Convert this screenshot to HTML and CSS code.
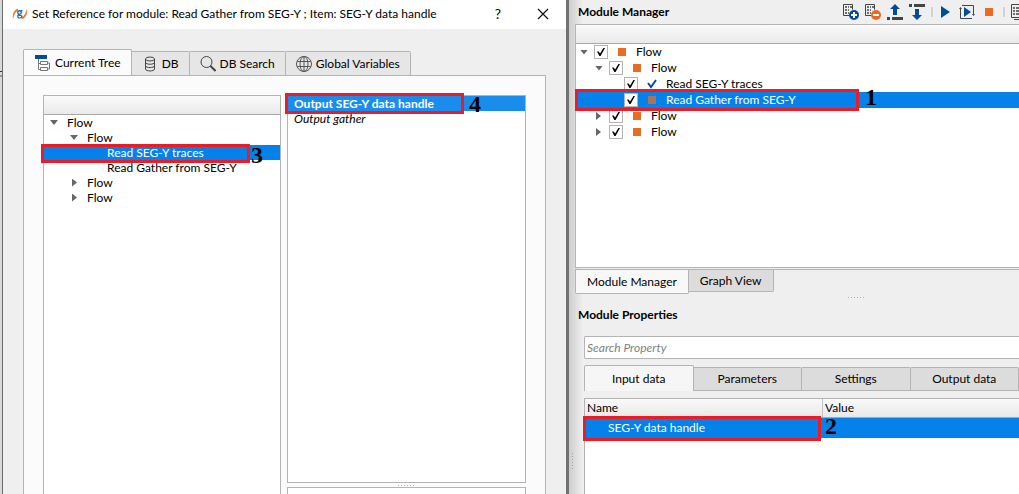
FILE: index.html
```html
<!DOCTYPE html>
<html lang="en">
<head>
    <meta charset="UTF-8">
    <meta name="viewport" content="width=device-width, initial-scale=1.0">
    <title>Set Reference for module</title>
    <link rel="stylesheet" href="styles.css">
</head>
<body>
    <div class="edge"></div>

    <!-- Reference dialog -->
    <section class="dialog">
        <header class="titlebar">
            <svg class="app-logo" width="16" height="16" viewBox="0 0 16 16">
                <path d="M6 2.500C2 4 0 8 1 13c1-4 2-7 5-8.500z" fill="#f07a28"/>
                <path d="M9.500 13.500C14 12 16 8 14.500 3c-.5 4-2 7-5 8.500z" fill="#f07a28"/>
                <circle cx="7.500" cy="6.500" r="1.800" fill="none" stroke="#1c6fb8" stroke-width="1.400"/>
                <path d="M8.500 4.700h2M7 8.300l-1 1.200h3c1.500 0 1.200 2.500-1.500 2.500-2 0-2.200-1.500-1-2.200" fill="none" stroke="#1c6fb8" stroke-width="1.200"/>
            </svg>
            <h1>Set Reference for module: Read Gather from SEG-Y ; Item: SEG-Y data handle</h1>
            <button class="title-btn" aria-label="Help">
                <span>?</span>
            </button>
            <button class="title-btn" aria-label="Close">
                <svg width="12" height="12" viewBox="0 0 12 12"><path d="M1 1l10 10M11 1L1 11" stroke="#111" stroke-width="1.200"/></svg>
            </button>
        </header>

        <div class="dialog-body">
            <nav class="tabs">
                <button class="tab active">
                    <svg width="16" height="16" viewBox="0 0 16 16">
                        <path d="M0 0h12v4H0z" fill="#004c97"/>
                        <path d="M3.500 4v10.500h2M3.500 8.500h2M5.500 6.500h7v3h-7zM5.500 12.500h7v3h-7zM12.500 8h2v6h-2" fill="none" stroke="#777"/>
                    </svg>
                    Current Tree
                </button>
                <button class="tab">
                    <svg width="16" height="16" viewBox="0 0 16 16">
                        <g fill="none" stroke="#444">
                            <ellipse cx="8" cy="3" rx="4.500" ry="2"/>
                            <path d="M3.500 3v10c0 2.600 9 2.600 9 0V3M3.500 6.300c0 2.600 9 2.600 9 0M3.500 9.600c0 2.600 9 2.600 9 0"/>
                        </g>
                    </svg>
                    DB
                </button>
                <button class="tab">
                    <svg width="16" height="16" viewBox="0 0 16 16">
                        <circle cx="6.500" cy="6" r="5.500" fill="none" stroke="#444"/>
                        <path d="M10.500 10l5 5" stroke="#444" stroke-width="2"/>
                    </svg>
                    DB Search
                </button>
                <button class="tab">
                    <svg width="16" height="16" viewBox="0 0 16 16">
                        <g fill="none" stroke="#555">
                            <circle cx="8" cy="8" r="7.500"/>
                            <ellipse cx="8" cy="8" rx="4" ry="7.500"/>
                            <path d="M8 .5v15M1.500 5.500h13M1.500 10.500h13"/>
                        </g>
                    </svg>
                    Global Variables
                </button>
            </nav>

            <div class="tab-page">
                <div class="tree">
                    <div class="list-header"></div>
                    <ul class="rows">
                        <li class="row"><i class="arrow open"></i>Flow</li>
                        <li class="row level-1"><i class="arrow open"></i>Flow</li>
                        <li class="row level-2 selected">Read SEG-Y traces<b class="mark mark-3"></b><b class="num num-3">3</b></li>
                        <li class="row level-2">Read Gather from SEG-Y</li>
                        <li class="row level-1"><i class="arrow"></i>Flow</li>
                        <li class="row level-1"><i class="arrow"></i>Flow</li>
                    </ul>
                </div>
                <div class="outputs">
                    <ul class="output-list">
                        <li class="row output selected">Output SEG-Y data handle<b class="mark mark-4"></b><b class="num num-4">4</b></li>
                        <li class="row output gather">Output gather</li>
                    </ul>
                    <div class="grip"></div>
                    <div class="output-info"></div>
                </div>
            </div>
        </div>
    </section>

    <!-- Main window behind the dialog -->
    <main class="main">
        <section class="manager">
            <header class="manager-head">
                <h2>Module Manager</h2>
                <div class="toolbar">
                    <button aria-label="Add module">
                        <svg width="16" height="16" viewBox="0 0 16 16">
                            <path d="M.5 11.500V.5h9v5M.5 11.500h6" fill="none" stroke="#444"/>
                            <path d="M2 3h2M5 3h1M7 3h2M2 6h2M5 6h1M2 9h2M5 9h1" stroke="#444" stroke-width="1.500"/>
                            <circle cx="11" cy="11" r="5" fill="#004c97"/>
                            <path d="M11 8v6M8 11h6" stroke="#fff" stroke-width="2"/>
                        </svg>
                    </button>
                    <button aria-label="Remove module">
                        <svg width="16" height="16" viewBox="0 0 16 16">
                            <path d="M.5 11.500V.5h9v5M.5 11.500h6" fill="none" stroke="#444"/>
                            <path d="M2 3h2M5 3h1M7 3h2M2 6h2M5 6h1M2 9h2M5 9h1" stroke="#444" stroke-width="1.500"/>
                            <circle cx="11" cy="11" r="5" fill="#ea6a20"/>
                            <path d="M8 11h6" stroke="#fff" stroke-width="2"/>
                        </svg>
                    </button>
                    <button aria-label="Move up">
                        <svg width="16" height="16" viewBox="0 0 16 16">
                            <path d="M8 0l5 5h-3v6H6V5H3z" fill="#004c97"/>
                            <path d="M0 13h3v3H0zM5 13h11v3H5z" fill="#444"/>
                        </svg>
                    </button>
                    <button aria-label="Move down">
                        <svg width="16" height="16" viewBox="0 0 16 16">
                            <path d="M8 16l5-5h-3V5H6v6H3z" fill="#004c97"/>
                            <path d="M0 0h3v3H0zM5 0h11v3H5z" fill="#444"/>
                        </svg>
                    </button>
                    <span class="sep"></span>
                    <button aria-label="Run">
                        <svg width="14" height="16" viewBox="0 0 14 16"><path d="M2 2l9 6-9 6z" fill="#004c97"/></svg>
                    </button>
                    <button aria-label="Run flow">
                        <svg width="16" height="16" viewBox="0 0 16 16">
                            <path d="M3 1.500h11.500v9M13 14.500H1.500V5" fill="none" stroke="#444"/>
                            <path d="M0 5l1.500-2L3 5zM13 10h3l-1.500 2z" fill="#444"/>
                            <path d="M5 3l7 5-7 5z" fill="#004c97"/>
                        </svg>
                    </button>
                    <button aria-label="Stop">
                        <svg width="16" height="16" viewBox="0 0 16 16"><path d="M4 4h8v8H4z" fill="#ea6a20"/></svg>
                    </button>
                    <span class="sep"></span>
                    <button aria-label="Show log" class="cut">
                        <svg width="16" height="16" viewBox="0 0 16 16">
                            <path d="M.5 .5h12v13H.5zM3 15.500h12V3" fill="none" stroke="#444"/>
                            <path d="M2 4h2M5 4h6M2 7h2M5 7h6M2 10h2M5 10h6" stroke="#444" stroke-width="1.500"/>
                        </svg>
                    </button>
                </div>
            </header>

            <div class="module-tree">
                <div class="list-header"></div>
                <ul class="rows">
                    <li class="row"><i class="arrow open"></i><label><input type="checkbox" checked><i class="state"></i>Flow</label></li>
                    <li class="row level-1"><i class="arrow open"></i><label><input type="checkbox" checked><i class="state"></i>Flow</label></li>
                    <li class="row level-2"><label><input type="checkbox" checked><svg class="done" width="10" height="10" viewBox="0 0 10 10"><path d="M1 4l3 4 5-7" fill="none" stroke="#004c97" stroke-width="2"/></svg>Read SEG-Y traces</label></li>
                    <li class="row level-2 selected"><label><input type="checkbox" checked><i class="state dim"></i>Read Gather from SEG-Y</label><b class="mark mark-1"></b><b class="num num-1">1</b></li>
                    <li class="row level-1"><i class="arrow"></i><label><input type="checkbox" checked><i class="state"></i>Flow</label></li>
                    <li class="row level-1"><i class="arrow"></i><label><input type="checkbox" checked><i class="state"></i>Flow</label></li>
                </ul>
            </div>

            <nav class="view-tabs">
                <button class="view-tab active">Module Manager</button>
                <button class="view-tab">Graph View</button>
            </nav>
        </section>

        <div class="grip window-grip"></div>

        <section class="properties">
            <h2>Module Properties</h2>
            <input class="search" type="text" placeholder="Search Property" aria-label="Search Property">
            <nav class="prop-tabs">
                <button class="prop-tab active">Input data</button>
                <button class="prop-tab">Parameters</button>
                <button class="prop-tab">Settings</button>
                <button class="prop-tab">Output data</button>
            </nav>
            <div class="prop-box">
                <table class="prop-table">
                    <thead>
                        <tr><th class="name-col">Name</th><th>Value</th></tr>
                    </thead>
                    <tbody>
                        <tr class="selected">
                            <td class="item">SEG-Y data handle<b class="mark mark-2"></b></td>
                            <td class="value"><b class="num num-2">2</b></td>
                        </tr>
                    </tbody>
                </table>
            </div>
        </section>
        <div class="side-grip"></div>
    </main>
</body>
</html>
```

FILE: styles.css
```css
* {
    box-sizing: border-box;
}

body {
    margin: 0;
    display: flex;
    height: 100vh;
    overflow: hidden;
    background-color: #efefef;
    color: #000;
    font-family: Lato, "Open Sans", sans-serif;
    font-size: 12px;
    line-height: 16px;
}

h1, h2, ul {
    margin: 0;
    padding: 0;
    font-size: 12px;
}

ul {
    list-style: none;
}

button {
    margin: 0;
    padding: 0;
    border: none;
    background: none;
    color: #000;
    font: inherit;
}

svg {
    display: block;
    flex-shrink: 0;
}

.edge {
    width: 3px;
    flex-shrink: 0;
    background: linear-gradient(transparent 71px, #333 71px 72px, transparent 72px 75px, #999 75px 77px, transparent 77px) #d8d8d8;
    border-right: 1px solid #6c6c6c;
}

/* Dialog */
.dialog {
    flex: 563 1 0;
    min-width: 0;
    display: flex;
    flex-direction: column;
    border-right: 3px solid #707372;
}

.titlebar {
    display: flex;
    align-items: center;
    height: 29px;
    padding: 0 10px 2px 9px;
    background-color: #fff;
}

.titlebar h1 {
    flex: 1;
    margin-left: 4px;
    font-weight: normal;
    white-space: nowrap;
}

.title-btn {
    display: flex;
    align-items: center;
    justify-content: center;
    width: 26px;
    height: 26px;
    margin-left: 19px;
    font-size: 14px;
}

.dialog-body {
    flex: 1;
    display: flex;
    flex-direction: column;
    min-height: 0;
    padding: 20px 20px 0;
}

.tabs {
    display: flex;
    align-items: flex-end;
    height: 27px;
    margin-bottom: -1px;
}

.tab {
    display: flex;
    align-items: center;
    gap: 4px;
    height: 25px;
    padding: 0 10px;
    border: 1px solid #b4b4b4;
    border-left: none;
    border-radius: 0 2px 0 0;
    background-color: #e6e6e6;
    white-space: nowrap;
}

.tab.active {
    height: 27px;
    padding-left: 11px;
    border-left: 1px solid #b4b4b4;
    border-bottom-color: #fbfbfb;
    border-radius: 2px 2px 0 0;
    background-color: #fbfbfb;
}

.tab-page {
    flex: 1;
    display: flex;
    gap: 6px;
    min-height: 0;
    padding: 19px 19px 0;
    border: 1px solid #b4b4b4;
    border-bottom: none;
    background-color: #fbfbfb;
}

.tree {
    flex: 236 1 0;
    min-width: 0;
    border: 1px solid #b4b4b4;
    border-bottom: none;
    background-color: #fff;
}

.list-header {
    height: 19px;
    border-bottom: 1px solid #a8a8a8;
    background: linear-gradient(#fafafa, #e9e9e9);
}

.row {
    position: relative;
    display: flex;
    align-items: center;
    height: 15px;
    padding-left: 23px;
    white-space: nowrap;
}

.level-1 { padding-left: 43px; }
.level-2 { padding-left: 63px; }

.selected {
    background-color: #0482ea;
    color: #fff;
}

.arrow {
    width: 5px;
    height: 8px;
    margin: 0 10px 0 -15px;
    background-color: #666;
    clip-path: polygon(0 0, 100% 50%, 0 100%);
}

.arrow.open {
    width: 8px;
    height: 5px;
    margin: 0 9px 0 -17px;
    clip-path: polygon(0 0, 100% 0, 50% 100%);
}

.outputs {
    flex: 239 1 0;
    min-width: 0;
    display: flex;
    flex-direction: column;
}

.output-list {
    flex: 1;
    border: 1px solid #b4b4b4;
    background-color: #fff;
}

.output {
    padding-left: 6px;
}

.output.selected {
    background-color: #1a8cec;
    font-weight: bold;
}

.gather {
    font-style: italic;
}

.output-info {
    height: 7px;
    border: 1px solid #b4b4b4;
    border-bottom: none;
    background-color: #fff;
}

.grip {
    height: 4px;
    flex-shrink: 0;
    background: repeating-linear-gradient(90deg, #b0b0b0 0 1px, transparent 1px 3px) center / 17px 1px no-repeat;
}

.window-grip {
    background-position: 64% center;
}

/* Numbered red frames */
.mark {
    position: absolute;
    z-index: 1;
    border: 3px solid #ed1c24;
}

.num {
    position: absolute;
    z-index: 2;
    color: #000;
    font: bold 24px/18px "Liberation Serif", serif;
}

.mark-1 { left: -1px; top: -3px; width: 284px; height: 22px; }
.num-1 { left: 289px; top: -4px; }
.mark-2 { left: -2px; top: -2px; right: 2px; height: 25px; }
.num-2 { left: 2px; top: -1px; }
.mark-3 { left: -3px; top: -1px; width: 209px; height: 19px; }
.num-3 { left: 207px; top: 1px; }
.mark-4 { left: -3px; top: -3px; width: 179px; height: 21px; }
.num-4 { left: 181px; top: -1px; }

/* Main window */
.main {
    position: relative;
    flex: 444 1 0;
    min-width: 0;
    display: flex;
    flex-direction: column;
    padding-left: 6px;
    overflow: hidden;
    background: linear-gradient(90deg, #cecece, #efefef 14px);
}

.manager-head {
    display: flex;
    align-items: center;
    justify-content: space-between;
    height: 24px;
    padding-left: 3px;
}

.toolbar {
    display: flex;
    align-items: center;
    gap: 6px;
}

.cut {
    margin-right: -8px;
}

.sep {
    width: 2px;
    height: 10px;
    background-color: #d2d2d2;
}

.module-tree {
    height: 244px;
    border: 1px solid #b4b4b4;
    border-right: none;
    background-color: #fff;
}

.module-tree .row {
    height: 16px;
    padding-left: 18px;
}

.module-tree .level-1 { padding-left: 33px; }
.module-tree .level-2 { padding-left: 48px; }
.module-tree .arrow { margin: 0 8px 0 -13px; }
.module-tree .arrow.open { margin: 0 6px 0 -14px; }

.row label {
    display: flex;
    align-items: center;
}

.row input {
    appearance: none;
    width: 14px;
    height: 14px;
    margin: 0 10px 0 0;
    padding: 2px;
    border: 1px solid #b4b4b4;
    background-color: #fff;
}

.row input:checked::before {
    content: "";
    display: block;
    width: 8px;
    height: 8px;
    background-color: #000;
    clip-path: polygon(0 45%, 20% 45%, 38% 68%, 80% 0, 100% 0, 45% 100%, 30% 100%);
}

.state {
    width: 8px;
    height: 8px;
    margin-right: 10px;
    background-color: #ea6a20;
}

.state.dim {
    background-color: #a87460;
}

.done {
    margin: 0 9px 0 -1px;
}

.view-tabs {
    display: flex;
    align-items: flex-start;
    height: 26px;
    margin-top: 1px;
    border-top: 1px solid #b4b4b4;
}

.view-tab {
    height: 22px;
    padding: 0 11px;
    border: 1px solid #b4b4b4;
    border-top: none;
    border-left: none;
    border-radius: 0 0 2px 0;
    background-color: #dcdcdc;
}

.view-tab.active {
    height: 24px;
    border-left: 1px solid #b4b4b4;
    border-radius: 0 0 2px 2px;
    background-color: #f8f8f8;
}

.properties {
    flex: 1;
    display: flex;
    flex-direction: column;
    padding-left: 9px;
}

.properties h2 {
    margin: 8px 0 13px -6px;
}

.search {
    height: 23px;
    padding: 0 2px;
    border: 1px solid #b4b4b4;
    border-right: none;
    border-radius: 2px 0 0 2px;
    font: inherit;
}

.search::placeholder {
    color: #808080;
    font-style: italic;
}

.prop-tabs {
    display: flex;
    align-items: flex-end;
    height: 26px;
    margin-top: 6px;
}

.prop-tab {
    flex: 1;
    height: 24px;
    border: 1px solid #b4b4b4;
    border-left: none;
    border-radius: 0 2px 0 0;
    background-color: #dcdcdc;
}

.prop-tab.active {
    height: 26px;
    border-left: 1px solid #b4b4b4;
    border-bottom: none;
    border-radius: 2px 2px 0 0;
    background-color: #f6f6f6;
}

.prop-box {
    flex: 1;
    margin-top: 7px;
    border: 1px solid #b4b4b4;
    border-right: none;
    border-bottom: none;
    background-color: #fff;
}

.prop-table {
    width: 100%;
    border-collapse: separate;
    border-spacing: 0;
    table-layout: fixed;
}

.prop-table th {
    height: 19px;
    padding: 0 2px;
    border-bottom: 1px solid #a8a8a8;
    background: linear-gradient(#fafafa, #e9e9e9);
    font-weight: normal;
    text-align: left;
}

.prop-table .name-col {
    width: 238px;
    border-right: 1px solid #c4c4c4;
}

.prop-table td {
    position: relative;
    height: 20px;
    padding: 0;
}

.prop-table .item {
    padding-left: 23px;
}

.side-grip {
    position: absolute;
    left: 3px;
    top: 453px;
    width: 1px;
    height: 16px;
    background: repeating-linear-gradient(#a0a0a0 0 1px, transparent 1px 3px);
}
```
